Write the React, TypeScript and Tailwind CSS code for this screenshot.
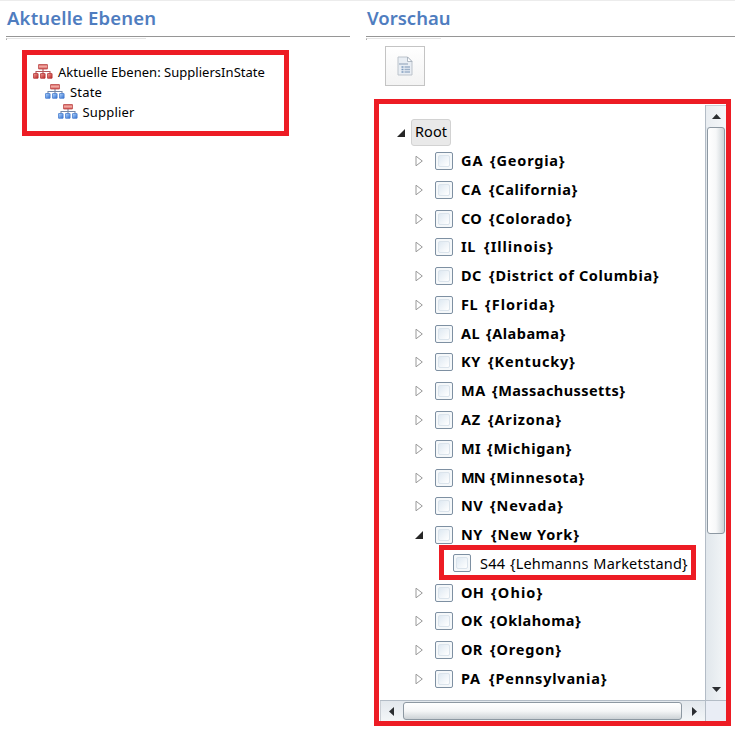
import { useId } from "react"

interface StateRow {
    code: string
    name: string
    codeStyle: string
    nameStyle: string
    open?: boolean
    child?: string
}

const states: StateRow[] = [
    { code: "GA", name: "{Georgia}", codeStyle: "w-[29px] tracking-[1px]", nameStyle: "tracking-[0.8px]" },
    { code: "CA", name: "{California}", codeStyle: "w-[28px] tracking-[0.8px]", nameStyle: "tracking-[0.6px]" },
    { code: "CO", name: "{Colorado}", codeStyle: "w-[28px] tracking-[0.3px]", nameStyle: "tracking-[0.7px]" },
    { code: "IL", name: "{Illinois}", codeStyle: "w-[23px] tracking-[0.5px]", nameStyle: "tracking-[0.95px]" },
    { code: "DC", name: "{District of Columbia}", codeStyle: "w-[28px] tracking-[0.5px]", nameStyle: "tracking-[0.68px]" },
    { code: "FL", name: "{Florida}", codeStyle: "w-[24px] tracking-[0.5px]", nameStyle: "tracking-[1px]" },
    { code: "AL", name: "{Alabama}", codeStyle: "w-[25px] tracking-[0.5px]", nameStyle: "tracking-[0.5px]" },
    { code: "KY", name: "{Kentucky}", codeStyle: "w-[27px] tracking-[0.5px]", nameStyle: "tracking-[0.8px]" },
    { code: "MA", name: "{Massachussetts}", codeStyle: "w-[31px] tracking-[0.5px]", nameStyle: "tracking-[0.43px]" },
    { code: "AZ", name: "{Arizona}", codeStyle: "w-[27px] tracking-[0.8px]", nameStyle: "tracking-[0.8px]" },
    { code: "MI", name: "{Michigan}", codeStyle: "w-[26px] tracking-[0.3px]", nameStyle: "tracking-[0.7px]" },
    { code: "MN", name: "{Minnesota}", codeStyle: "w-[29px] tracking-[-0.8px]", nameStyle: "tracking-[0.6px]" },
    { code: "NV", name: "{Nevada}", codeStyle: "w-[29px] tracking-[0.5px]", nameStyle: "tracking-[0.9px]" },
    { code: "NY", name: "{New York}", codeStyle: "w-[30px] tracking-[0.5px]", nameStyle: "tracking-[0.8px]", open: true, child: "S44 {Lehmanns Marketstand}" },
    { code: "OH", name: "{Ohio}", codeStyle: "w-[30px] tracking-[0.3px]", nameStyle: "tracking-[1.1px]" },
    { code: "OK", name: "{Oklahoma}", codeStyle: "w-[29px] tracking-[0.3px]", nameStyle: "tracking-[0.5px]" },
    { code: "OR", name: "{Oregon}", codeStyle: "w-[29px] tracking-[0.3px]", nameStyle: "tracking-[0.8px]" },
    { code: "PA", name: "{Pennsylvania}", codeStyle: "w-[28px] tracking-[0.8px]", nameStyle: "tracking-[0.78px]" },
]

export default function App() {
    return (
        <div className="flex h-[729px] w-[735px] gap-4 overflow-hidden border-t border-[#ececec] bg-white pl-[6px] font-['Noto_Sans','Open_Sans',sans-serif] text-black">
            <section className="w-[344px] shrink-0">
                <PanelTitle title="Aktuelle Ebenen" tracking="tracking-[0.17px]" accent="w-[140px]" />
                <div className="mt-[10px] ml-4 h-[86px] w-[267px] border-[5px] border-[#ed1c24] pt-[7px] pl-[6px]">
                    <Level label="Aktuelle Ebenen: SuppliersInState" root className="tracking-[0.03px]" />
                    <Level label="State" className="ml-3 tracking-[0.2px]" />
                    <Level label="Supplier" className="ml-[24.5px] tracking-[0.2px]" />
                </div>
            </section>

            <section className="w-[369px] shrink-0">
                <PanelTitle title="Vorschau" tracking="tracking-[0px]" accent="w-[75px]" />
                <button className="mt-[6px] ml-[19px] flex h-10 w-10 items-center justify-center border border-[#c4c4c4] bg-linear-to-b from-white to-[#f3f3f3]">
                    <DocumentIcon />
                </button>

                {/* preview tree */}
                <div className="mt-[13px] ml-2 grid h-[627px] w-[357px] grid-cols-[326px_21px] grid-rows-[596px_21px] border-[5px] border-[#ed1c24]">
                    <div className="overflow-hidden pt-[15px]">
                        <div className="flex h-[27px] items-center pl-[18px]">
                            <OpenArrow />
                            <span className="ml-[6px] flex h-[27px] w-10 items-center justify-center rounded-[3px] border border-[#d2d2d2] bg-[#e9e9e9] pb-[2px] text-[14.5px]">Root</span>
                        </div>
                        {states.map((state) => (
                            <TreeRow key={state.code} state={state} />
                        ))}
                    </div>

                    {/* vertical scrollbar */}
                    <div className="mt-px flex flex-col border-l border-[#b3bcc6] bg-linear-to-r from-[#e1e7ec] to-[#f3f6f8]">
                        <div className="flex h-[22px] items-center justify-center border-t border-[#c9ced4] bg-linear-to-r from-[#e9edf1] to-[#f5f7f9]">
                            <svg width="9" height="5" viewBox="0 0 9 5"><path d="M4.5 0 9 5H0z" fill="#2b2e31" /></svg>
                        </div>
                        <div className="mx-px h-[407px] rounded-[3px] border border-[#8d98a2] bg-linear-to-r from-white via-[#f7f8f9] to-[#cdd4d8]" />
                        <div className="flex flex-1 items-end justify-center pb-[8px]">
                            <svg width="9" height="5" viewBox="0 0 9 5"><path d="M0 0h9L4.5 5z" fill="#2b2e31" /></svg>
                        </div>
                    </div>

                    {/* horizontal scrollbar */}
                    <div className="ml-px flex border-t border-[#b3bcc6] bg-linear-to-b from-[#e3e8ed] to-[#f3f6f8]">
                        <div className="flex w-[23px] items-center justify-center border-l border-[#c9ced4] pr-[2px]">
                            <svg width="5" height="9" viewBox="0 0 5 9"><path d="M5 0v9L0 4.5z" fill="#2b2e31" /></svg>
                        </div>
                        <div className="my-px w-[279px] rounded-[3px] border border-[#8d98a2] bg-linear-to-b from-white via-[#f5f6f7] to-[#cdd2d6]" />
                        <div className="flex flex-1 items-center justify-center pl-[2px]">
                            <svg width="5" height="9" viewBox="0 0 5 9"><path d="M0 0v9l5-4.5z" fill="#2b2e31" /></svg>
                        </div>
                    </div>
                    <div className="border-t border-l border-[#b3bcc6] bg-[#e9edf5]" />
                </div>
            </section>
        </div>
    )
}

function PanelTitle({ title, tracking, accent }: { title: string; tracking: string; accent: string }) {
    return (
        <div className="h-[39px]">
            <h2 className={`h-[35px] pl-px text-[18.5px] leading-[34px] font-semibold whitespace-nowrap text-[#4f7dbf] ${tracking}`}>{title}</h2>
            <div className="border-t border-[#969696]" />
            <div className={`mt-px h-[2px] border-t border-l border-[#e4e4e4] border-l-[#aaa] ${accent}`} />
        </div>
    )
}

function Level({ label, root, className }: { label: string; root?: boolean; className: string }) {
    return (
        <div className={`flex h-5 items-center text-[13px] whitespace-nowrap ${className}`}>
            <HierarchyIcon leaf={root ? "red" : "blue"} />
            <span className="ml-[5px] pt-[2px]">{label}</span>
        </div>
    )
}

function TreeRow({ state }: { state: StateRow }) {
    return (
        <>
            <div className="flex h-[28.78px] items-center">
                <div className="mt-[1.5px] ml-9 w-[20px]">
                    {state.open ? <OpenArrow /> : <ClosedArrow />}
                </div>
                <Checkbox />
                <div className="ml-2 flex text-[14.5px] leading-none font-bold whitespace-nowrap">
                    <span className={state.codeStyle}>{state.code}</span>
                    <span className={state.nameStyle}>{state.name}</span>
                </div>
            </div>
            {state.child && (
                <div className="flex h-[28.78px] items-center pl-[60px]">
                    <div className="mt-[-5px] mb-[-3px] flex h-[35px] w-[257px] shrink-0 items-center border-[5px] border-[#ed1c24] pl-[9px]">
                        <Checkbox />
                        <span className="ml-[9px] pt-[2.5px] text-[14.5px] leading-none tracking-[0.2px] [word-spacing:0.8px] whitespace-nowrap">{state.child}</span>
                    </div>
                </div>
            )}
        </>
    )
}

function Checkbox() {
    return (
        <span className="mt-[1.5px] flex h-[18px] w-[18px] shrink-0 rounded-[2px] border border-[#7e90a2] bg-[#f5f8fa] p-[2px]">
            <span className="flex-1 rounded-[2px] border border-[#dbe4ec] bg-linear-to-br from-[#dfe9f2] to-white" />
        </span>
    )
}

function OpenArrow() {
    return (
        <svg width="8" height="8" viewBox="0 0 8 8" className="shrink-0"><path d="M8 0v8H0z" fill="#262626" /></svg>
    )
}

function ClosedArrow() {
    return (
        <svg width="8" height="12" viewBox="0 0 8 12"><path d="M1 1.2v9.6L7.3 6z" fill="#fff" stroke="#999" strokeWidth="1" /></svg>
    )
}

function HierarchyIcon({ leaf }: { leaf: "red" | "blue" }) {
    const id = useId()
    const red = leaf === "red"
    return (
        <svg width="20" height="15" viewBox="0 0 20 15" className="-mt-px shrink-0">
            <defs>
                <linearGradient id={`${id}top`} x1="0" y1="0" x2="0" y2="1">
                    <stop offset="0" stopColor="#d9605c" />
                    <stop offset="0.5" stopColor="#f2b0aa" />
                    <stop offset="1" stopColor="#c8403e" />
                </linearGradient>
                <linearGradient id={`${id}leaf`} x1="0" y1="0" x2="1" y2="1">
                    <stop offset="0" stopColor={red ? "#f0a09a" : "#b5d6fb"} />
                    <stop offset="1" stopColor={red ? "#b8201f" : "#2f6ed2"} />
                </linearGradient>
            </defs>
            <path d="M10 5v5M3 10V7.5h14V10" fill="none" stroke={red ? "#b4565a" : "#7488a8"} strokeWidth="1.1" />
            <rect x="5.5" y="0.5" width="9" height="4.5" rx="0.3" fill={`url(#${id}top)`} stroke="#bd4b4b" strokeWidth="0.8" />
            {[0.5, 7.5, 14.5].map((x) => (
                <rect key={x} x={x} y="9.5" width="4.6" height="4.8" rx="0.3" fill={`url(#${id}leaf)`} stroke={red ? "#b73a3c" : "#4a7fd0"} strokeWidth="0.8" />
            ))}
        </svg>
    )
}

function DocumentIcon() {
    return (
        <svg width="16" height="20" viewBox="0 0 16 20">
            <path d="M1 1h9.5L15 5.5V19H1z" fill="#e9eef4" stroke="#bcc3cb" />
            <path d="M10.5 1v4.5H15z" fill="#fff" stroke="#9faab6" strokeWidth="0.8" />
            <path d="M2 8h9" stroke="#8a9db5" />
            <path d="M4.5 11h2M4.5 13.5h2M4.5 16h2" stroke="#7d9abd" strokeWidth="1.4" />
            <path d="M7.5 11h5.5M7.5 13.5h5.5M7.5 16h5.5" stroke="#9db1c9" strokeWidth="1.4" />
        </svg>
    )
}
